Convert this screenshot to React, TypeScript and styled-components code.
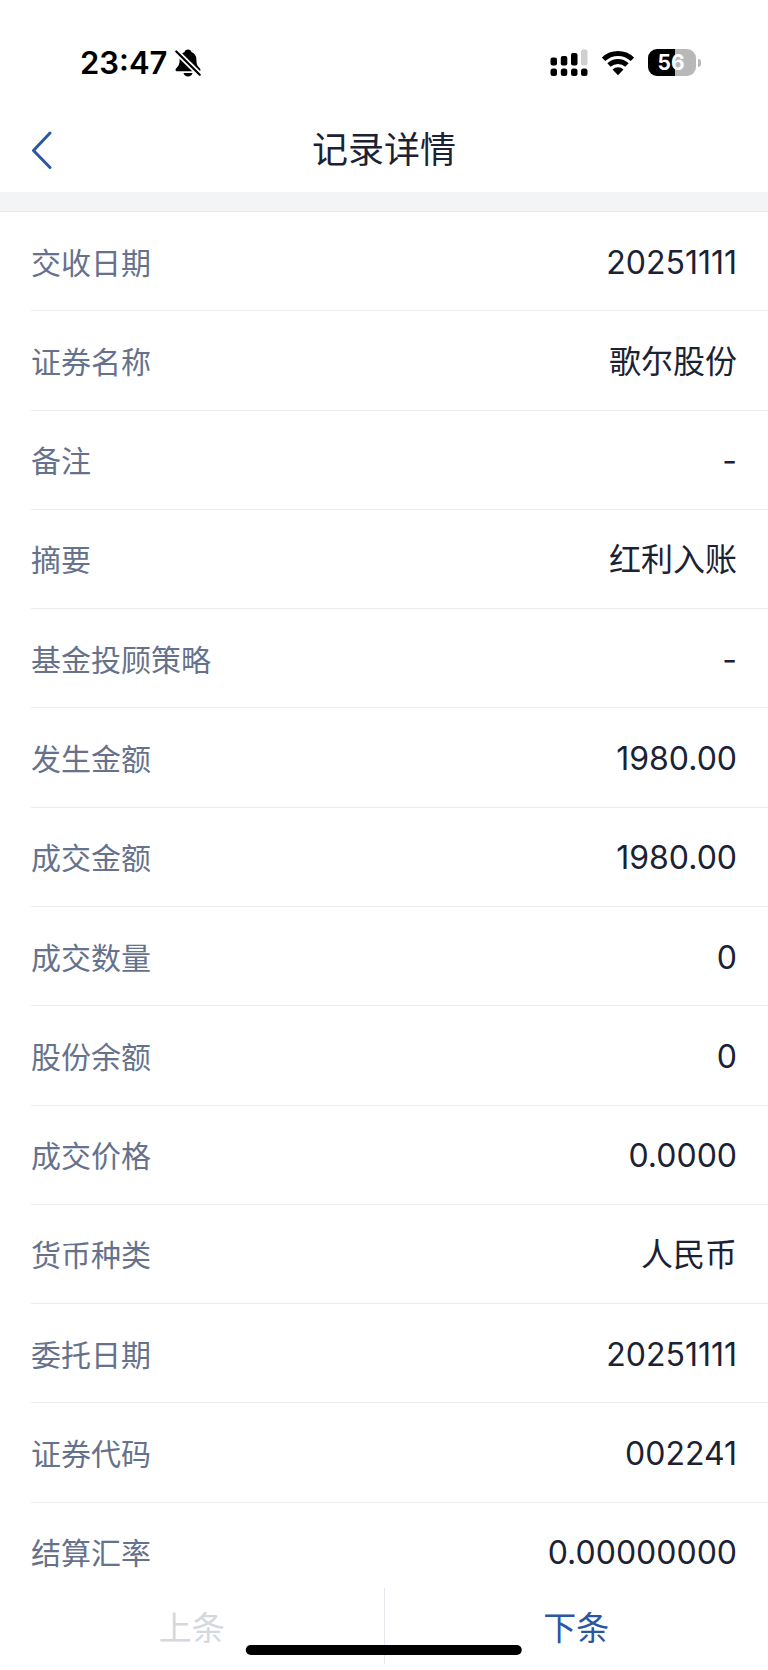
import React from 'react';
import styled, { createGlobalStyle } from 'styled-components';

const GlobalStyle = createGlobalStyle`
  *, *::before, *::after { box-sizing: border-box; }
  body {
    margin: 0;
    background: #ffffff;
    color: #1b2233;
    font-family: Inter, "Noto Sans CJK SC", sans-serif;
  }
`;

const Page = styled.div`
  display: flex;
  flex-direction: column;
  min-height: 100vh;
  padding-bottom: 68px;
`;

const StatusBar = styled.div`
  display: flex;
  align-items: center;
  justify-content: space-between;
  height: 108px;
  padding: 17px 67px 0 80px;
  color: #000000;
`;

const StatusGroup = styled.div<{ $gap: number }>`
  display: flex;
  align-items: center;
  gap: ${({ $gap }) => $gap}px;
`;

const Clock = styled.time`
  font-size: 31px;
  line-height: 40px;
  font-weight: 600;
`;

const Battery = styled.div`
  display: flex;
  align-items: center;
  gap: 2px;
`;

const BatteryBody = styled.div<{ $level: number }>`
  width: 48px;
  height: 27px;
  padding-right: 2px;
  border-radius: 9px;
  background: linear-gradient(to right, #000000 ${({ $level }) => $level}%, #b8b8b8 ${({ $level }) => $level}%);
  color: #ffffff;
  font-size: 21px;
  line-height: 27px;
  font-weight: 700;
  text-align: center;
`;

const BatteryTip = styled.div`
  width: 3px;
  height: 8px;
  border-radius: 0 3px 3px 0;
  background: #b8b8b8;
`;

const NavBar = styled.header`
  display: grid;
  grid-template-columns: 96px 1fr 96px;
  align-items: center;
  height: 84px;
`;

const BackButton = styled.button`
  display: flex;
  align-items: center;
  height: 84px;
  padding: 0 0 0 30px;
  border: 0;
  background: none;
  cursor: pointer;
`;

const Title = styled.h1`
  margin: 0;
  font-size: 36px;
  line-height: 48px;
  font-weight: 400;
  text-align: center;
`;

const SectionGap = styled.div`
  height: 20px;
  background: #f3f4f6;
  border-bottom: 1px solid #e8e9eb;
`;

const RecordList = styled.dl`
  flex: 1;
  display: grid;
  grid-auto-rows: minmax(99px, 1fr);
  margin: 0;
  padding-left: 31px;
`;

const RecordRow = styled.div`
  display: flex;
  align-items: center;
  justify-content: space-between;
  padding: 3px 31px 0 0;
  border-bottom: 1px solid #ededef;
`;

const Label = styled.dt`
  color: #66728c;
  font-size: 30px;
  line-height: 44px;
`;

const Value = styled.dd`
  margin: 0;
  font-size: 32px;
  line-height: 44px;
`;

const Footer = styled.nav`
  position: fixed;
  right: 0;
  bottom: 0;
  left: 0;
  display: flex;
  height: 82px;
  padding-bottom: 6px;
  background: #ffffff;
`;

const PagerButton = styled.button`
  flex: 1;
  padding: 4px 0 0;
  border: 0;
  background: none;
  color: #2b56a1;
  font-family: inherit;
  font-size: 33px;
  line-height: 44px;
  cursor: pointer;

  & + & { border-left: 1px solid #e6e7ee; }
  &:disabled { color: #d5d8df; cursor: default; }
`;

const HomeIndicator = styled.div`
  position: absolute;
  bottom: 15px;
  left: 50%;
  width: 36%;
  height: 10px;
  border-radius: 5px;
  background: #000000;
  transform: translateX(-50%);
`;

const BellOffIcon = () => (
  <svg width="26" height="28" viewBox="0 0 26 28" aria-hidden="true">
    <path d="M13 .5c-1.900 0-3.200 1.100-3.400 2.500C6.200 4.200 4.600 7.200 4.600 10.500c0 4.500-1 6.300-2.600 8C.8 19.800.4 20.400.6 21.200c.2.700.7 1 1.600 1h21.600c.9 0 1.400-.3 1.600-1 .2-.8-.2-1.400-1.400-2.700-1.600-1.700-2.600-3.500-2.600-8 0-3.300-1.600-6.300-5-7.500C16.200 1.600 14.900.5 13 .5Z" />
    <path d="M8.500 24h9c-.5 2.200-2.200 3.500-4.500 3.500S9 26.200 8.500 24Z" />
    <path d="M0 1.200 25.500 26.500" stroke="#ffffff" strokeWidth="5.600" />
    <path d="M1.300 2.500 24.700 25.700" stroke="#000000" strokeWidth="2.200" strokeLinecap="round" />
  </svg>
);

const SignalIcon = () => (
  <svg width="38" height="28" viewBox="0 0 38 28" aria-hidden="true">
    <rect x="0.500" y="8.500" width="6.500" height="8" rx="2" />
    <rect x="10.800" y="7" width="6.500" height="9.500" rx="2" />
    <rect x="21" y="4" width="6.500" height="12.500" rx="2" />
    <rect x="31" y="0.500" width="6.500" height="16" rx="2" fill="#d0d0d0" />
    {[0.5, 10.8, 21, 31].map((x) => (
      <rect key={x} x={x} y="19.500" width="6.500" height="7.500" rx="2.500" />
    ))}
  </svg>
);

const WifiIcon = () => (
  <svg width="32" height="26" viewBox="0 0 32 26" fill="none" stroke="#000000" strokeWidth="4.800" aria-hidden="true">
    <path d="M1.600 9.300a20.800 20.800 0 0 1 28.800 0" />
    <path d="M7 15.100a13 13 0 0 1 18 0" />
    <path d="M16 25.200 10.500 19.500a8 8 0 0 1 11 0Z" fill="#000000" stroke="none" />
  </svg>
);

const ChevronLeftIcon = () => (
  <svg width="22" height="40" viewBox="0 0 22 40" fill="none" stroke="#2b56a1" strokeWidth="3" strokeLinecap="round" strokeLinejoin="round" aria-hidden="true">
    <path d="M20 3 3.500 20.500 20 37.500" />
  </svg>
);

const records: [string, string][] = [
  ['交收日期', '20251111'],
  ['证券名称', '歌尔股份'],
  ['备注', '-'],
  ['摘要', '红利入账'],
  ['基金投顾策略', '-'],
  ['发生金额', '1980.00'],
  ['成交金额', '1980.00'],
  ['成交数量', '0'],
  ['股份余额', '0'],
  ['成交价格', '0.0000'],
  ['货币种类', '人民币'],
  ['委托日期', '20251111'],
  ['证券代码', '002241'],
  ['结算汇率', '0.00000000'],
];

export default function App() {
  return (
    <>
      <GlobalStyle />
      <Page>
        <StatusBar>
          <StatusGroup $gap={8}>
            <Clock>23:47</Clock>
            <BellOffIcon />
          </StatusGroup>
          <StatusGroup $gap={14}>
            <SignalIcon />
            <WifiIcon />
            <Battery>
              <BatteryBody $level={56}>56</BatteryBody>
              <BatteryTip />
            </Battery>
          </StatusGroup>
        </StatusBar>
        <NavBar>
          <BackButton type="button" aria-label="返回">
            <ChevronLeftIcon />
          </BackButton>
          <Title>记录详情</Title>
        </NavBar>
        <SectionGap />
        <RecordList>
          {records.map(([label, value]) => (
            <RecordRow key={label}>
              <Label>{label}</Label>
              <Value>{value}</Value>
            </RecordRow>
          ))}
        </RecordList>
      </Page>
      <Footer>
        <PagerButton type="button" disabled>上条</PagerButton>
        <PagerButton type="button">下条</PagerButton>
        <HomeIndicator />
      </Footer>
    </>
  );
}
